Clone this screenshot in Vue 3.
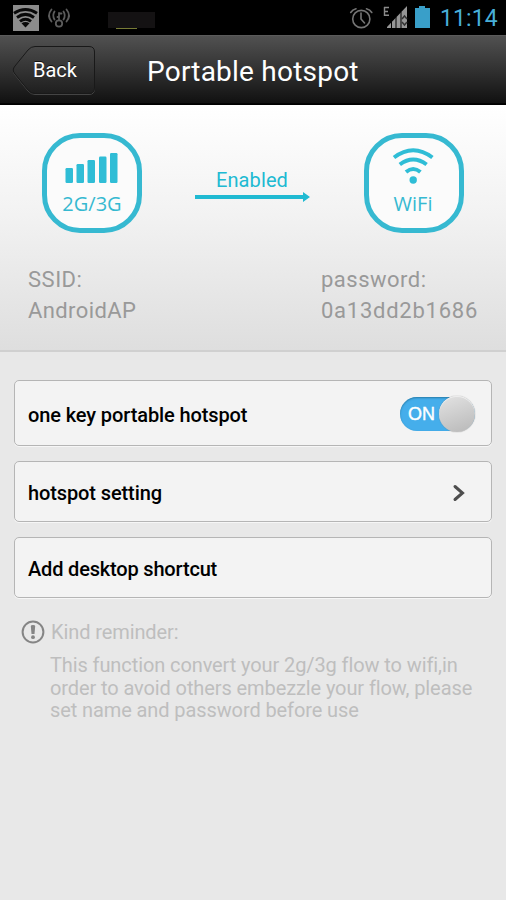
<script setup>
const bars = [
  { x: 65, y: 168, h: 15 },
  { x: 76, y: 164, h: 19 },
  { x: 87, y: 160, h: 23 },
  { x: 98.5, y: 156.5, h: 26.5 },
  { x: 109.5, y: 153, h: 30 },
]
</script>

<template>
  <div class="screen">
    <div class="status">
      <svg class="status-icons" width="180" height="35" viewBox="0 0 180 35">
        <rect x="13" y="5" width="26" height="26" fill="#8c8c8c" />
        <g fill="none" stroke="#080808" stroke-width="3">
          <path d="M14 13.2Q25.500 5.800 37 13.200" />
          <path d="M17 17.400Q25.500 11.400 34 17.400" />
          <path d="M20 21.400Q25.500 17.200 31 21.400" />
        </g>
        <path d="M21.500 23.300Q25.500 20.500 29.500 23.300L25.500 27.500Z" fill="#080808" />
        <g fill="none" stroke="#5c5c5c" stroke-width="1.800" stroke-linecap="round">
          <circle cx="59" cy="23.500" r="3.200" />
          <path d="M59 20V13M59 13.500H61.500M57.500 17H59" />
          <path d="M54.500 11.500Q52 15.500 54.500 19.500M63.500 11.500Q66 15.500 63.500 19.500M51.500 9.500Q46.500 15.500 51.500 21.500M66.500 9.500Q71.500 15.500 66.500 21.500" />
        </g>
        <rect x="108" y="12" width="47" height="16" fill="#141213" />
        <rect x="116" y="28" width="21" height="1" fill="#777b35" />
      </svg>
      <div class="status-right">
        <svg width="84" height="35" viewBox="348 0 84 35">
          <g fill="none" stroke="#747474" stroke-width="1.600" stroke-linecap="round">
            <circle cx="361.300" cy="19" r="8.600" />
            <path d="M361 13V19L364.500 23M350.700 12.500Q352.500 9.500 356 8.700M366.500 8.700Q370 9.500 371.800 12.500" />
          </g>
          <path d="M384 7.500h5M384 11.500h4M384 15.300h5M384.500 7v9" stroke="#8b8b8b" stroke-width="1.400" fill="none" />
          <path d="M387 28V27L407 6V28Z" fill="#969696" />
          <path d="M391.500 20V28M396 17V28M401 12V28" stroke="#000" stroke-width="1" />
          <path d="M402 19l2.500-3 2.500 3M402 22l2.500 3 2.500-3" stroke="#333" stroke-width="1.500" fill="none" />
          <path d="M415 8h4V6h6v2h5v20h-15Z" fill="#399fc9" />
        </svg>
        <span class="clock">11:14</span>
      </div>
    </div>

    <header class="bar">
      <button class="back">
        <svg class="back-shape" width="86" height="52" viewBox="0 0 86 52">
          <defs>
            <linearGradient id="back-fill" x1="0" y1="0" x2="0" y2="1">
              <stop offset="0" stop-color="#484848" />
              <stop offset="1" stop-color="#1e1e1e" />
            </linearGradient>
          </defs>
          <path d="M23 1.500H77Q82.500 1.500 82.500 7V43Q82.500 48.500 77 48.500H23Q19 48.500 16 45L3 29Q-.5 25 3 21L16 5Q19 1.500 23 1.500Z" fill="none" stroke="#444" transform="translate(0 1)" />
          <path d="M23 1.500H77Q82.500 1.500 82.500 7V43Q82.500 48.500 77 48.500H23Q19 48.500 16 45L3 29Q-.5 25 3 21L16 5Q19 1.500 23 1.500Z" fill="url(#back-fill)" stroke="#191919" />
        </svg>
        <span class="back-label">Back</span>
      </button>
      <h1 class="title">Portable hotspot</h1>
    </header>

    <section class="hero">
      <div class="link">
        <div class="badge">
          <svg width="54" height="32" viewBox="64.500 152 54 32">
            <rect v-for="b in bars" :key="b.x" :x="b.x" :y="b.y" width="7.500" :height="b.h" rx="1.200" fill="#2fbdd6" />
          </svg>
          <span class="badge-label">2G/3G</span>
        </div>
        <div class="flow">
          <span class="enabled">Enabled</span>
          <svg width="115" height="10" viewBox="0 0 115 10">
            <path d="M0 3H108V0L115 5L108 10V7H0Z" fill="#20bad2" />
          </svg>
        </div>
        <div class="badge">
          <svg class="waves" width="42" height="37" viewBox="392 147 42 37">
            <g fill="none" stroke="#2fbdd6" stroke-width="4">
              <path d="M394 157.500Q413.200 143 432.400 157.500" />
              <path d="M399.800 164.500Q413.200 154.500 426.600 164.500" />
              <path d="M406 172Q413.200 166 420.400 172" />
            </g>
            <circle cx="413.200" cy="180" r="3.700" fill="#2fbdd6" />
          </svg>
          <span class="badge-label">WiFi</span>
        </div>
      </div>
      <div class="creds">
        <div class="cred"><span>SSID:</span><span class="ap">AndroidAP</span></div>
        <div class="cred pw"><span>password:</span><span class="key">0a13dd2b1686</span></div>
      </div>
    </section>

    <main class="list">
      <div class="card tall">
        <span>one key portable hotspot</span>
        <div class="switch"><span class="on">ON</span><i class="knob"></i></div>
      </div>
      <div class="card">
        <span>hotspot setting</span>
        <svg class="chevron" width="14" height="18" viewBox="0 0 14 18">
          <path d="M3 2.500L10.500 9L3 15.500" fill="none" stroke="#4d4d4d" stroke-width="3" stroke-linecap="round" />
        </svg>
      </div>
      <div class="card"><span class="shortcut">Add desktop shortcut</span></div>
    </main>

    <section class="reminder">
      <div class="reminder-head">
        <svg width="24" height="24" viewBox="0 0 24 24">
          <circle cx="12" cy="12" r="10.400" fill="none" stroke="#858585" stroke-width="2" />
          <path d="M9.800 6Q9.800 5 12 5T14.200 6L13.500 14H10.500Z" fill="#858585" />
          <circle cx="12" cy="17.200" r="1.900" fill="#858585" />
        </svg>
        <span>Kind reminder:</span>
      </div>
      <p class="note">
        <span>This function convert your 2g/3g flow to wifi,in</span>
        <span>order to avoid others embezzle your flow, please</span>
        <span>set name and password before use</span>
      </p>
    </section>
  </div>
</template>

<style>
body { margin: 0; background: #e8e8e8; }
</style>

<style scoped>
.screen { width: 506px; height: 900px; overflow: hidden; background: #e8e8e8; font-family: Roboto, sans-serif; white-space: nowrap; font-variant-ligatures: none; }
.status { height: 35px; background: #000; display: flex; justify-content: space-between; }
.status svg { display: block; }
.status-right { display: flex; padding-right: 8px; }
.clock { width: 58px; margin-left: 8px; font-size: 23px; line-height: 38px; color: #48afd8; letter-spacing: .1px; }
.bar { box-sizing: border-box; height: 70px; display: flex; align-items: flex-start; padding: 9px 0 0 12px; background: linear-gradient(#515151, #343434 45%, #111 97%, #000 98%); border-top: 1px solid #5b5b5b; }
.back { width: 86px; height: 52px; padding: 0; border: 0; background: none; display: grid; color: #fff; font: 400 20px/51px Roboto, sans-serif; text-align: left; }
.back-shape, .back-label { grid-area: 1 / 1; }
.back-label { padding-left: 21px; text-shadow: 0 -1px #111; }
.title { margin: 0 0 0 49px; font-size: 28px; line-height: 53px; font-weight: 400; color: #fff; letter-spacing: .22px; }
.hero { box-sizing: border-box; height: 247px; padding: 28px 42px 0; background: linear-gradient(#fff, #f2f2f2 45%, #dedede); border-bottom: 2px solid #d0d0d0; }
.link { display: flex; justify-content: space-between; }
.badge { box-sizing: border-box; width: 100px; height: 100px; border: 5px solid #36b9d1; border-radius: 38px; background: #fbfbfb; display: flex; flex-direction: column; align-items: center; justify-content: flex-end; padding-bottom: 10px; }
.badge svg { display: block; }
.badge .waves { margin-right: 2px; }
.badge-label { font: 20px/28px "Open Sans", sans-serif; height: 28px; color: #36b9d1; margin-top: 6px; }
.badge .waves + .badge-label { margin-right: 2px; }
.flow { width: 115px; display: flex; flex-direction: column; align-items: center; padding: 35px 2px 0 0; }
.enabled { color: #20bad2; font-size: 20px; line-height: 24px; letter-spacing: .1px; }
.flow svg { display: block; }
.creds { display: flex; justify-content: space-between; margin: 31px -14px 0; color: #999; font-size: 22px; line-height: 31px; letter-spacing: .5px; }
.cred { display: flex; flex-direction: column; }
.ap { letter-spacing: .4px; }
.pw { width: 157px; }
.key { letter-spacing: .75px; }
.list { padding: 28px 14px 0; display: flex; flex-direction: column; gap: 15px; }
.card { box-sizing: border-box; height: 61px; padding: 2px 14px 0 13px; border: 1px solid #b5b5b5; border-radius: 5px; background: #f3f3f3; box-shadow: 0 1px #f6f6f6; display: flex; align-items: center; justify-content: space-between; font-size: 20px; font-weight: 500; letter-spacing: -.11px; color: #000; }
.shortcut { letter-spacing: -.18px; }
.tall { height: 66px; padding-top: 3px; }
.chevron { margin-right: 11px; }
.switch { position: relative; width: 75px; height: 34px; border-radius: 17px; background: #45aeeb; box-shadow: inset 0 1px 2px #287ca8; margin-right: 2px; margin-top: -2px; }
.on { display: block; padding-left: 8px; font: 18px/35px "Liberation Sans", sans-serif; color: #fff; -webkit-text-stroke: .4px #fff; }
.knob { position: absolute; right: 0; top: -1px; width: 36px; height: 36px; border-radius: 50%; background: linear-gradient(160deg, #e3e3e3, #b8b8b8); box-shadow: 0 0 1px #777, inset 0 1px #eee; }
.reminder { padding: 22px 21px 0; font-size: 20px; color: #bebebe; letter-spacing: -.1px; }
.reminder-head { display: flex; align-items: center; gap: 6px; height: 24px; }
.note { margin: 10px 0 0 29px; line-height: 22.700px; }
.note span { display: block; }
</style>
